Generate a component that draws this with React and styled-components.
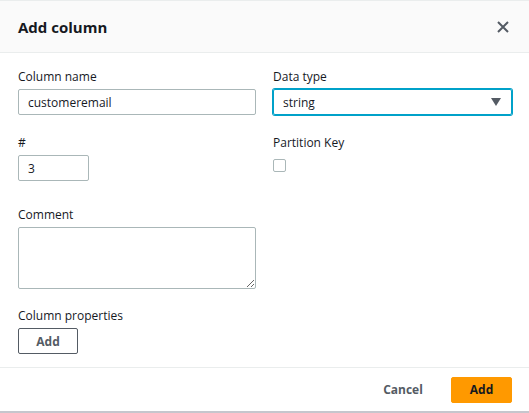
import React from "react";
import styled, { createGlobalStyle } from "styled-components";

const Global = createGlobalStyle`
  html, body { margin: 0; padding: 0; background: #fff; }
  body { font-family: "Open Sans", "Noto Sans", Arial, sans-serif; color: #16191f; }
  * { box-sizing: border-box; }
`;

const Modal = styled.div`
  width: 529px;
  height: 413px;
  display: flex;
  flex-direction: column;
  border-top: 1px solid #eaeded;
  border-bottom: 2px solid #c6c6cd;
  background: #fff;
`;

const Header = styled.div`
  height: 52px;
  flex: none;
  display: flex;
  align-items: center;
  justify-content: space-between;
  padding: 0 18px;
  background: #fafafa;
  border-bottom: 1px solid #eaeded;
`;

const Title = styled.h2`
  margin: 0;
  font-size: 15px;
  font-weight: 700;
  color: #16191f;
`;

const CloseButton = styled.button`
  border: none;
  background: none;
  padding: 0;
  margin-right: 1px;
  width: 14px;
  height: 14px;
  display: flex;
  cursor: pointer;
`;

const Body = styled.div`
  flex: 1;
  padding: 15px 17px 0 18px;
  display: grid;
  grid-template-columns: 238px 239px;
  column-gap: 17px;
  align-content: start;
`;

const Field = styled.div`
  display: flex;
  flex-direction: column;
  margin-top: ${(p) => p.$top || 0}px;
  grid-column: ${(p) => (p.$full ? "1 / span 2" : "auto")};
`;

const Label = styled.label`
  font-size: 12px;
  line-height: 18px;
  color: #16191f;
  margin-bottom: 3px;
`;

const TextInput = styled.input`
  width: ${(p) => p.$width || "100%"};
  height: 26px;
  border: 1px solid #aab7b8;
  border-radius: 2px;
  padding: 0 9px;
  font-family: inherit;
  font-size: 12px;
  color: #16191f;
  outline: none;
`;

const TextArea = styled.textarea`
  width: 100%;
  height: 62px;
  border: 1px solid #aab7b8;
  border-radius: 2px;
  font-family: inherit;
  font-size: 12px;
  outline: none;
  display: block;
`;

const Select = styled.div`
  height: 26px;
  border: 1px solid #00a1c9;
  box-shadow: 0 0 0 1px #00a1c9;
  border-radius: 2px;
  padding: 0 10px 0 9px;
  display: flex;
  align-items: center;
  justify-content: space-between;
  font-size: 12px;
  color: #16191f;
`;

const Caret = styled.span`
  width: 0;
  height: 0;
  border-left: 5px solid transparent;
  border-right: 5px solid transparent;
  border-top: 8px solid #545b64;
`;

const CheckBox = styled.span`
  width: 13px;
  height: 13px;
  margin-top: 4px;
  border: 1px solid #aab7b8;
  border-radius: 2px;
  background: #fff;
`;

const Button = styled.button`
  height: 26px;
  width: ${(p) => p.$width}px;
  font-family: inherit;
  font-size: 12px;
  font-weight: 700;
  border-radius: 2px;
  cursor: pointer;
  padding: 0;
  color: ${(p) => (p.$variant === "primary" ? "#16191f" : "#545b64")};
  background: ${(p) =>
    p.$variant === "primary" ? "#ff9900" : p.$variant === "link" ? "transparent" : "#fff"};
  border: 1px solid
    ${(p) =>
      p.$variant === "primary" ? "#ff9900" : p.$variant === "link" ? "transparent" : "#545b64"};
`;

const Footer = styled.div`
  flex: none;
  height: 44px;
  border-top: 1px solid #eaeded;
  display: flex;
  align-items: center;
  justify-content: flex-end;
  gap: 17px;
  padding: 0 17px 0 0;
`;

export default function App() {
  return (
    <>
      <Global />
      <Modal>
        <Header>
          <Title>Add column</Title>
          <CloseButton aria-label="Close">
            <svg width="14" height="14" viewBox="0 0 14 14">
              <path d="M2 2 L12 12 M12 2 L2 12" stroke="#545b64" strokeWidth="2" fill="none" />
            </svg>
          </CloseButton>
        </Header>
        <Body>
          <Field>
            <Label>Column name</Label>
            <TextInput defaultValue="customeremail" />
          </Field>
          <Field>
            <Label>Data type</Label>
            <Select>
              <span>string</span>
              <Caret />
            </Select>
          </Field>
          <Field $top={19}>
            <Label>#</Label>
            <TextInput defaultValue="3" $width="71px" />
          </Field>
          <Field $top={19}>
            <Label>Partition Key</Label>
            <CheckBox />
          </Field>
          <Field $top={25}>
            <Label>Comment</Label>
            <TextArea />
          </Field>
          <div />
          <Field $top={18} $full>
            <Label>Column properties</Label>
            <Button $width={60}>Add</Button>
          </Field>
        </Body>
        <Footer>
          <Button $variant="link" $width={62}>Cancel</Button>
          <Button $variant="primary" $width={61}>Add</Button>
        </Footer>
      </Modal>
    </>
  );
}
